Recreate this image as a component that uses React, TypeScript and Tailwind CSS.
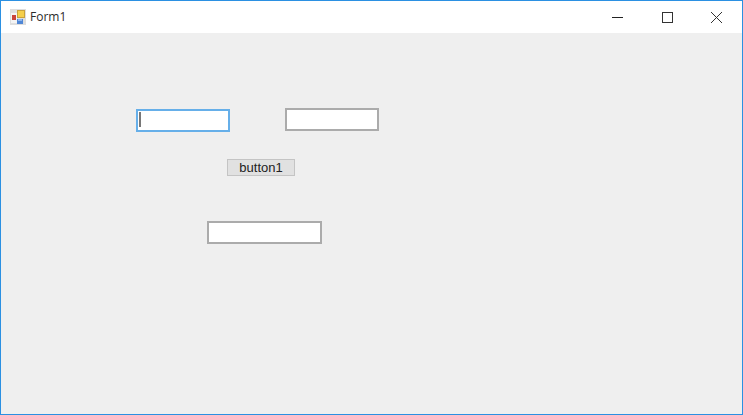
const TextBox = ({ className, focused }: { className: string; focused?: boolean }) => {
  return (
    <div
      className={
        focused
          ? `box-border flex items-center border-2 border-[#66afe9] bg-white pl-[1px] ${className}`
          : `box-border border-2 border-[#ababab] bg-white ${className}`
      }
    >
      {focused && <div className="-mt-[2px] h-[15px] w-[2px] bg-[#777]" />}
    </div>
  );
};

const TitleBar = () => {
  return (
    <div className="flex h-[32px] items-center bg-white">
      <svg className="-mt-[1px] ml-[9px] h-[16px] w-[16px]" viewBox="0 0 16 16">
        <rect x="0" y="0" width="16" height="16" fill="#dedede" />
        <rect x="1" y="4" width="6" height="10" fill="#f4f4f4" />
        <rect x="2" y="6" width="4" height="5" fill="#c9443c" />
        <rect x="7" y="1" width="8" height="8" fill="#c9a23c" />
        <rect x="8" y="2" width="6" height="6" fill="#f5cf4c" />
        <rect x="7" y="10" width="6" height="5" fill="#4f86d6" />
        <rect x="8" y="10" width="4" height="2" fill="#8fb6ec" />
      </svg>
      <span className="ml-[4px] font-['Open_Sans','Liberation_Sans',sans-serif] text-[12px] leading-none text-[#2b2b2b]">
        Form1
      </span>
      <div className="mr-[1px] ml-auto flex h-full">
        <div className="flex w-[49px] items-center justify-center">
          <svg className="h-[11px] w-[11px]" viewBox="0 0 11 11">
            <path d="M0 5.5H11" stroke="#222" strokeWidth="1" />
          </svg>
        </div>
        <div className="flex w-[50px] items-center justify-center">
          <svg className="h-[11px] w-[11px]" viewBox="0 0 11 11">
            <rect x="0.5" y="0.5" width="10" height="10" fill="none" stroke="#333" strokeWidth="1" />
          </svg>
        </div>
        <div className="flex w-[49px] items-center justify-center">
          <svg className="h-[11px] w-[11px]" viewBox="0 0 11 11">
            <path d="M0 0L11 11M11 0L0 11" stroke="#333" strokeWidth="1" />
          </svg>
        </div>
      </div>
    </div>
  );
};

export default function App() {
  return (
    <div className="box-border flex h-[415px] w-[743px] flex-col overflow-hidden border border-[#2b90e2] bg-[#efefef]">
      <TitleBar />
      <div className="flex-1">
        <div className="flex items-start pl-[135px] pt-[75px]">
          <TextBox focused className="mt-[1px] h-[23px] w-[94px]" />
          <TextBox className="ml-[55px] h-[23px] w-[94px]" />
        </div>
        <div className="pl-[226px] pt-[27px]">
          <button className="box-border flex h-[17px] w-[68px] items-center justify-center border border-[#c4c4c4] bg-[#e1e1e1] font-['Liberation_Sans',sans-serif] text-[13px] leading-none text-[#222]">
            button1
          </button>
        </div>
        <div className="pl-[206px] pt-[45px]">
          <TextBox className="h-[23px] w-[115px]" />
        </div>
      </div>
    </div>
  );
}
